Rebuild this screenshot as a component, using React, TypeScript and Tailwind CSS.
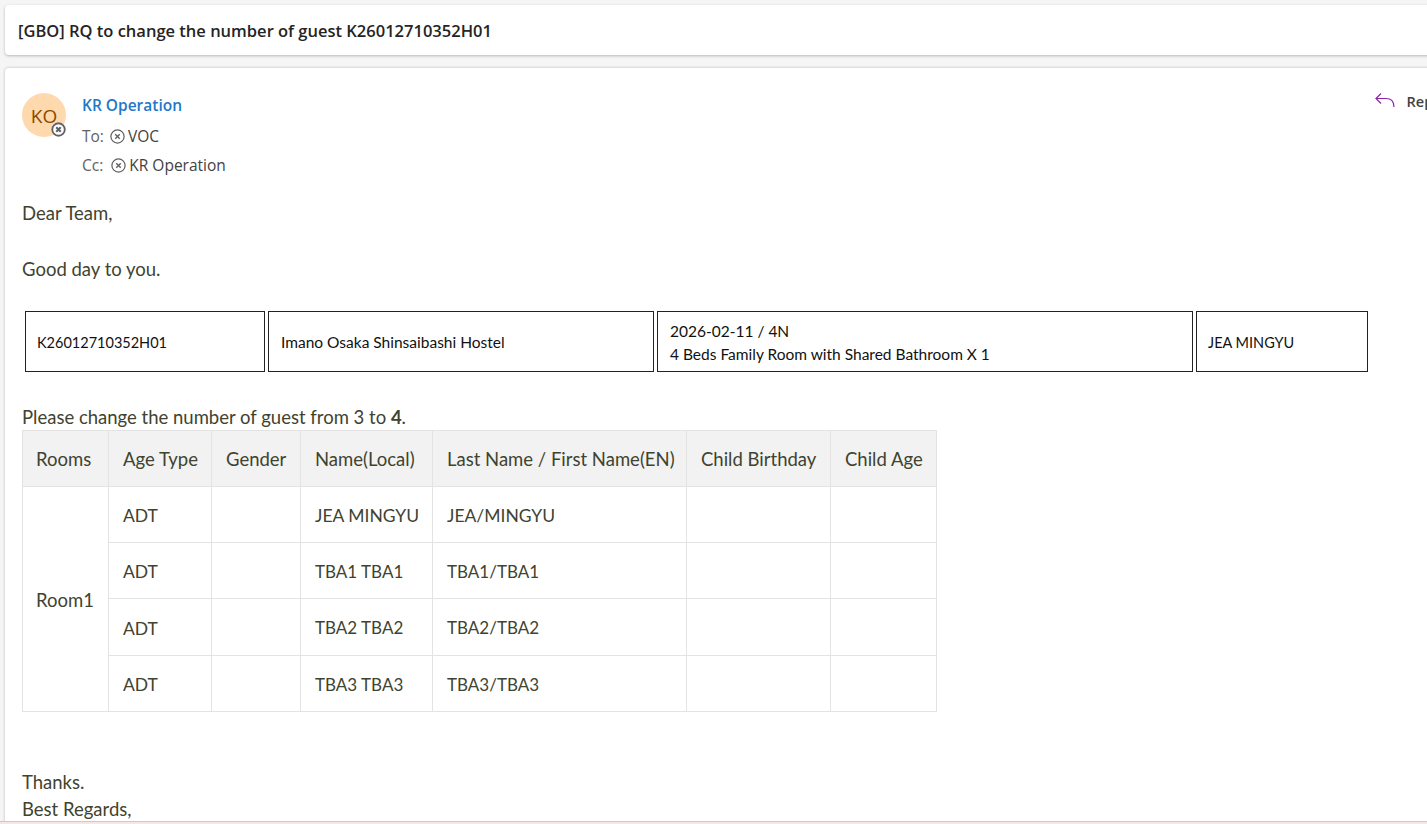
import React from "react";

const body = { fontFamily: "Lato, 'Noto Sans', sans-serif" };

const guests = [
    { age: "ADT", local: "JEA MINGYU", en: "JEA/MINGYU", h: "h-14", size: "text-[17.5px] pt-[4px]" },
    { age: "ADT", local: "TBA1 TBA1", en: "TBA1/TBA1", h: "h-14", size: "text-[17px] pt-[2px]" },
    { age: "ADT", local: "TBA2 TBA2", en: "TBA2/TBA2", h: "h-[57px]", size: "text-[17px] pt-[2px]" },
    { age: "ADT", local: "TBA3 TBA3", en: "TBA3/TBA3", h: "h-14", size: "text-[17px] pt-[2px]" },
];

const headers = [
    { label: "Rooms", w: "w-[86px] pl-[13px]" },
    { label: "Age Type", w: "w-[103px] pl-[14px]" },
    { label: "Gender", w: "w-[89px] pl-[14px]" },
    { label: "Name(Local)", w: "w-[132px] pl-[14px]" },
    { label: "Last Name / First Name(EN)", w: "w-[254px] pl-[14px]" },
    { label: "Child Birthday", w: "w-[144px] pl-[14px]" },
    { label: "Child Age", w: "w-[106px] pl-[14px]" },
];

const BlockedIcon: React.FC<{ size?: number; weight?: number }> = ({ size = 15, weight = 1.3 }) => (
    <svg width={size} height={size} viewBox="0 0 16 16" fill="none" stroke="#616161" className="shrink-0">
        <circle cx="8" cy="8" r={8 - weight / 2 - 0.3} strokeWidth={weight} />
        <path d="M5.6 5.6l4.8 4.8M10.4 5.6l-4.8 4.8" strokeWidth={weight + 0.2} />
    </svg>
);

const App: React.FC = () => {
    return (
        <div className="flex h-[824px] w-[1427px] flex-col overflow-hidden bg-[#f5f5f5]" style={{ fontFamily: "'Open Sans', sans-serif" }}>
            <div className="h-[821px] shrink-0 overflow-hidden pl-[5px] pt-[5px]">
                <div className="flex h-[50px] w-[1440px] items-center rounded-l bg-white pl-[13px] pt-[2px] text-[16.5px] font-semibold text-[#242424] shadow-[0_1px_3px_rgba(0,0,0,0.25)]">
                    [GBO] RQ to change the number of guest K26012710352H01
                </div>

                <div className="mt-[13px] h-[760px] w-[1440px] overflow-hidden rounded-tl bg-white pl-[17px] pt-[25px] shadow-[0_0_3px_rgba(0,0,0,0.25)]">
                    <div className="flex">
                        <div className="relative flex h-11 w-11 items-center justify-center rounded-full bg-[#ffd9ae] pt-[2px] text-[19px] text-[#8a4b00]">
                            KO
                            <span className="absolute bottom-0 right-0 flex h-[15px] w-[15px] items-center justify-center rounded-full bg-white">
                                <BlockedIcon size={15} weight={2} />
                            </span>
                        </div>
                        <div className="ml-4 text-[15.5px] leading-[20px] text-[#616161]">
                            <div className="mt-0.5 font-semibold text-[#1f78c8]">KR Operation</div>
                            <div className="mt-[11px] flex items-center">
                                To:
                                <span className="ml-[6px] mr-[3px]"><BlockedIcon /></span>
                                <span className="text-[#424242]">VOC</span>
                            </div>
                            <div className="mt-[9px] flex items-center">
                                Cc:
                                <span className="ml-[8px] mr-[3px]"><BlockedIcon /></span>
                                <span className="text-[#424242]">KR Operation</span>
                            </div>
                        </div>
                        <div className="ml-auto flex items-start text-[14.5px] font-semibold text-[#424242]">
                            <svg width="21" height="20" viewBox="0 0 21 20" fill="none" stroke="#8e24aa" strokeWidth="1.2" className="mr-[12px] mt-[-3px]">
                                <path d="M7 3.5L2 8.5l5 5M2 8.5h10c5 0 8 3 8 8.5" />
                            </svg>
                            <span className="-mt-[2px]">Reply</span>
                        </div>
                    </div>

                    <div className="mt-[24px] text-[18.5px] leading-[28px] text-[#3f432f]" style={body}>
                        <p>Dear Team,</p>
                        <p className="mt-[28px]">Good day to you.</p>
                    </div>

                    <div className="mt-[28px] flex gap-[3px] pl-[3px] text-[15.5px] leading-[23px] text-[#111]" style={body}>
                        <div className="flex h-[61px] w-[240px] items-center border border-[#222] pl-[11px] pt-px text-[14.5px]">K26012710352H01</div>
                        <div className="flex h-[61px] w-[386px] items-center border border-[#222] pl-3 pt-px">Imano Osaka Shinsaibashi Hostel</div>
                        <div className="flex h-[61px] w-[536px] flex-col justify-center border border-[#222] pl-3 pt-[2px]">
                            <div>2026-02-11 / 4N</div>
                            <div>4 Beds Family Room with Shared Bathroom X 1</div>
                        </div>
                        <div className="flex h-[61px] w-[172px] items-center border border-[#222] pl-[11px] pt-px text-[14.5px]">JEA MINGYU</div>
                    </div>

                    <p className="mt-[32px] text-[18.5px] leading-[26px] text-[#3f432f]" style={body}>
                        Please change the number of guest from 3 to <b>4</b>.
                    </p>

                    <table className="table-fixed border-collapse text-[18.5px] text-[#3f432f]" style={body}>
                        <thead>
                            <tr className="h-14 bg-[#f2f2f2]">
                                {headers.map((col) => (
                                    <th key={col.label} className={`${col.w} border border-[#e3e3e3] pt-[2px] text-left font-normal`}>
                                        {col.label}
                                    </th>
                                ))}
                            </tr>
                        </thead>
                        <tbody>
                            {guests.map((guest, i) => (
                                <tr key={guest.en} className={guest.h}>
                                    {i === 0 && (
                                        <td rowSpan={4} className="border border-[#e3e3e3] pl-[13px] pt-[3px]">Room1</td>
                                    )}
                                    <td className="border border-[#e3e3e3] pl-[14px] pt-[4px] text-[17.5px]">{guest.age}</td>
                                    <td className="border border-[#e3e3e3]"></td>
                                    <td className={`${guest.size} border border-[#e3e3e3] pl-[14px]`}>{guest.local}</td>
                                    <td className={`${guest.size} border border-[#e3e3e3] pl-[14px]`}>{guest.en}</td>
                                    <td className="border border-[#e3e3e3]"></td>
                                    <td className="border border-[#e3e3e3]"></td>
                                </tr>
                            ))}
                        </tbody>
                    </table>

                    <div className="mt-[57px] text-[18.5px] leading-[27px] text-[#3f432f]" style={body}>
                        <p>Thanks.</p>
                        <p>Best Regards,</p>
                    </div>
                </div>
            </div>
            <div className="h-[3px] shrink-0 border-t border-[#d9c3c3] bg-[#f7e6e6]"></div>
        </div>
    );
};

export default App;
